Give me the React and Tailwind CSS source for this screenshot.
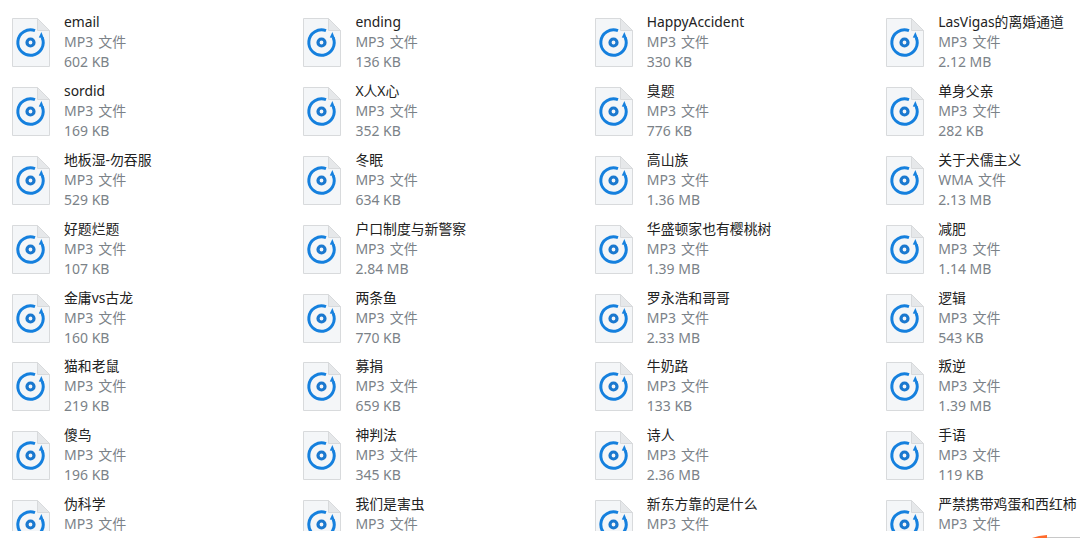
const columns = [
  [
    ["email", "MP3 文件", "602 KB"],
    ["sordid", "MP3 文件", "169 KB"],
    ["地板湿-勿吞服", "MP3 文件", "529 KB"],
    ["好题烂题", "MP3 文件", "107 KB"],
    ["金庸vs古龙", "MP3 文件", "160 KB"],
    ["猫和老鼠", "MP3 文件", "219 KB"],
    ["傻鸟", "MP3 文件", "196 KB"],
    ["伪科学", "MP3 文件", ""],
  ],
  [
    ["ending", "MP3 文件", "136 KB"],
    ["X人X心", "MP3 文件", "352 KB"],
    ["冬眠", "MP3 文件", "634 KB"],
    ["户口制度与新警察", "MP3 文件", "2.84 MB"],
    ["两条鱼", "MP3 文件", "770 KB"],
    ["募捐", "MP3 文件", "659 KB"],
    ["神判法", "MP3 文件", "345 KB"],
    ["我们是害虫", "MP3 文件", ""],
  ],
  [
    ["HappyAccident", "MP3 文件", "330 KB"],
    ["臭题", "MP3 文件", "776 KB"],
    ["高山族", "MP3 文件", "1.36 MB"],
    ["华盛顿家也有樱桃树", "MP3 文件", "1.39 MB"],
    ["罗永浩和哥哥", "MP3 文件", "2.33 MB"],
    ["牛奶路", "MP3 文件", "133 KB"],
    ["诗人", "MP3 文件", "2.36 MB"],
    ["新东方靠的是什么", "MP3 文件", ""],
  ],
  [
    ["LasVigas的离婚通道", "MP3 文件", "2.12 MB"],
    ["单身父亲", "MP3 文件", "282 KB"],
    ["关于犬儒主义", "WMA 文件", "2.13 MB"],
    ["减肥", "MP3 文件", "1.14 MB"],
    ["逻辑", "MP3 文件", "543 KB"],
    ["叛逆", "MP3 文件", "1.39 MB"],
    ["手语", "MP3 文件", "119 KB"],
    ["严禁携带鸡蛋和西红柿", "MP3 文件", ""],
  ],
];

function FileIcon() {
  return (
    <svg width="38" height="49" viewBox="0 0 38 49" className="shrink-0 block">
      <path d="M0.5 0.5H25.5L37.5 12.5V48.5H0.5Z" fill="#f4f6f8" stroke="#d8dadc" />
      <path d="M25.5 0.5V12.5H37.5Z" fill="#e6e8ea" stroke="#d8dadc" />
      <path d="M30.2 19.6A12.7 12.7 0 1 1 23 12.7" fill="none" stroke="#1580de" strokeWidth="3" />
      <path d="M29.4 14L31.8 20.2L26.8 19.4Z" fill="#1580de" />
      <circle cx="18.5" cy="24.5" r="3.5" fill="none" stroke="#1a78cf" strokeWidth="3.2" />
    </svg>
  );
}

function Row({ name, type, size }) {
  return (
    <div className="flex h-[68.9px] items-start">
      <div className="pt-[18px]">
        <FileIcon />
      </div>
      <div className="ml-[14px] flex flex-col pt-[12px] text-[14px] leading-[20px] whitespace-nowrap">
        <span className="text-[13.85px] text-[#222222]">{name}</span>
        <span className="text-[#7b8288] [word-spacing:1.5px]">{type}</span>
        {size ? <span className="text-[#7b8288]">{size}</span> : null}
      </div>
    </div>
  );
}

export default function App() {
  return (
    <div
      className="relative h-[538px] w-[1080px] overflow-hidden bg-white"
      style={{ fontFamily: '"Noto Sans", "Noto Sans CJK SC", sans-serif' }}
    >
      <div className="h-[531px] overflow-hidden pl-[12px]">
        <div className="grid w-[1168px] grid-cols-[291.4px_291.4px_291.4px_291.4px]">
          {columns.map((col, i) => (
            <div key={i} className="flex flex-col">
              {col.map((r) => (
                <Row key={r[0]} name={r[0]} type={r[1]} size={r[2]} />
              ))}
            </div>
          ))}
        </div>
      </div>
      <svg width="15" height="3" viewBox="0 0 15 3" className="absolute bottom-0 left-[1032px] block">
        <path d="M0 3L7 1L15 0V3Z" fill="#ff6b2c" />
      </svg>
      <div className="absolute bottom-0 left-[1047px] h-[1px] w-[33px] bg-[#c8c8c8]" />
    </div>
  );
}
